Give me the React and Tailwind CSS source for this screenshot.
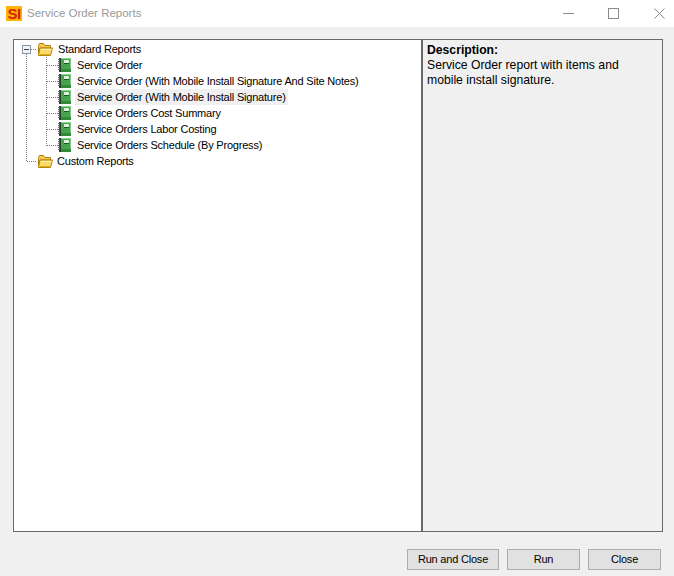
import React from "react";

const reports = [
  "Service Order",
  "Service Order (With Mobile Install Signature And Site Notes)",
  "Service Order (With Mobile Install Signature)",
  "Service Orders Cost Summary",
  "Service Orders Labor Costing",
  "Service Orders Schedule (By Progress)",
];

function FolderIcon() {
  return (
    <svg width="16" height="13" viewBox="0 0 16 13" className="shrink-0">
      <path d="M1.5 11.5V2.5L2.5 0.5H6.5L8 2.5H13.5V5H3Z" fill="#f2c94a" stroke="#b0860f" />
      <path d="M1.5 12.5L3 5H15.5L13.5 12.5Z" fill="#fbdc6a" stroke="#b0860f" />
      <path d="M4 6.5H14.5" stroke="#fff3b8" />
      <path d="M3 11.5H12.5" stroke="#e0ad1c" />
    </svg>
  );
}

function BookIcon() {
  return (
    <svg width="13" height="14" viewBox="0 0 13 14" className="shrink-0" shapeRendering="crispEdges">
      <rect x="1" y="0" width="12" height="14" fill="#46a34e" />
      <rect x="1" y="0" width="2" height="14" fill="#2a3f2c" />
      <rect x="3" y="0" width="10" height="1" fill="#8fd890" />
      <rect x="12" y="0" width="1" height="14" fill="#7cc982" />
      <rect x="3" y="11" width="10" height="3" fill="#2f8a38" />
      <rect x="6" y="2" width="5" height="3" fill="#d8efd8" />
      <path d="M6 5.5H11" stroke="#1f5a26" />
      <path d="M0 1.5H2M0 3.5H2M0 5.5H2M0 7.5H2M0 9.5H2M0 11.5H2" stroke="#6a6a6a" />
    </svg>
  );
}

function TreeLines() {
  return (
    <svg width="60" height="130" className="absolute left-0 top-0 pointer-events-none" shapeRendering="crispEdges">
      <g stroke="#808080" strokeDasharray="1 1" fill="none">
        <path d="M12.5 14V121.5H22" />
        <path d="M32.5 15V105.5" />
        <path d="M17 9.5H23" />
        <path d="M33 25.5H44M33 41.5H44M33 57.5H44M33 73.5H44M33 89.5H44M33 105.5H44" />
      </g>
      <rect x="8.5" y="5.5" width="8" height="8" fill="#f2f2f2" stroke="#8c97a8" />
      <path d="M10 9.5H15" stroke="#3c4650" />
    </svg>
  );
}

function Button({ label, width }) {
  return (
    <button className={`h-[21px] ${width} bg-[#e1e1e1] border border-[#adadad] text-[11px] tracking-[-0.2px] text-black`}>
      {label}
    </button>
  );
}

export default function App() {
  return (
    <div className="w-[674px] h-[576px] flex flex-col bg-[#f0f0f0] font-['Liberation_Sans',sans-serif] overflow-hidden">
      {/* Title bar */}
      <div className="h-[27px] bg-white flex items-center shrink-0">
        <div className="ml-[6px] w-[16px] h-[15px] bg-[#ffb300] flex items-center justify-center text-[#d81e05] text-[15px] font-bold leading-none tracking-[-0.5px]">
          SI
        </div>
        <span className="ml-[5px] text-[11.5px] text-[#999999]">Service Order Reports</span>
        <div className="ml-auto flex items-center">
          <svg width="11" height="11" viewBox="0 0 11 11" className="mr-[34px]">
            <path d="M0 5.5H11" stroke="#8a8a8a" />
          </svg>
          <svg width="11" height="11" viewBox="0 0 11 11" className="mr-[35px]">
            <rect x="0.5" y="0.5" width="10" height="10" fill="none" stroke="#8a8a8a" />
          </svg>
          <svg width="11" height="11" viewBox="0 0 11 11" className="mr-[9px]">
            <path d="M0.5 0.5L10.5 10.5M10.5 0.5L0.5 10.5" stroke="#8a8a8a" />
          </svg>
        </div>
      </div>

      {/* Panels */}
      <div className="flex ml-[13px] mt-[12px] w-[650px] h-[493px]">
        <div className="w-[408px] bg-white border border-[#696969] border-r-0 relative pt-px">
          <TreeLines />
          <div className="relative flex items-center h-[16px] pl-[23px] text-[11px] tracking-[-0.2px] text-black">
            <FolderIcon />
            <span className="ml-[5px]">Standard Reports</span>
          </div>
          {reports.map((name, i) => (
            <div key={name} className="relative flex items-center h-[16px] pl-[44px] text-[11px] tracking-[-0.2px] text-black">
              <BookIcon />
              <span className={`ml-[4px] px-[2px] leading-[16px] ${i === 2 ? "bg-[#f0f0f0]" : ""}`}>{name}</span>
            </div>
          ))}
          <div className="relative flex items-center h-[16px] pl-[23px] text-[11px] tracking-[-0.2px] text-black">
            <FolderIcon />
            <span className="ml-[4px]">Custom Reports</span>
          </div>
        </div>
        <div className="flex-1 border border-[#696969] border-l-2 pl-[4px] pt-[3px] text-[12.2px] leading-[15px] text-black">
          <div className="font-bold">Description:</div>
          <div className="w-[210px]">Service Order report with items and mobile install signature.</div>
        </div>
      </div>

      {/* Buttons */}
      <div className="flex justify-end gap-[8px] mt-[17px] pr-[13px]">
        <Button label="Run and Close" width="w-[92px]" />
        <Button label="Run" width="w-[73px]" />
        <Button label="Close" width="w-[73px]" />
      </div>
    </div>
  );
}
